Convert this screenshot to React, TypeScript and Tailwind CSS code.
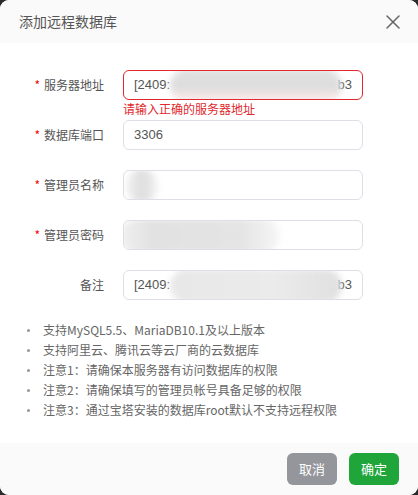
import { X } from 'lucide-react';

const font = { fontFamily: '"Noto Sans CJK SC", "Liberation Sans", sans-serif' };

type Blur = { left: number; width: number; color: string };

function Field({
  label,
  required,
  value,
  error,
  blurs = [],
}: {
  label: string;
  required?: boolean;
  value?: string;
  error?: string;
  blurs?: Blur[];
}) {
  return (
    <div className="flex items-start">
      <div className="w-[104px] h-[30px] flex items-center justify-end text-[12px] text-[#555]">
        {required && <span className="text-[#ef0808] mr-[4px] text-[12px]">*</span>}
        {label}
      </div>
      <div className="ml-[19px] w-[240px] h-[50px]">
        <div
          className={`relative h-[30px] w-full rounded-[6px] border bg-white flex items-center px-[10px] text-[13px] text-[#555] overflow-hidden ${
            error ? 'border-[#e0282e]' : 'border-[#dcdfe6]'
          }`}
          style={{ fontFamily: '"Liberation Sans", Arial, sans-serif' }}
        >
          <span className="whitespace-nowrap">{value}</span>
          {value && value.startsWith('[') && <span className="ml-auto">b3</span>}
          {blurs.map((b, i) => (
            <div
              key={i}
              className="absolute top-[-2px] bottom-[-4px] rounded-full blur-[3px]"
              style={{ left: b.left, width: b.width, background: b.color }}
            />
          ))}
        </div>
        {error && <div className="mt-[1px] text-[12px] leading-[16px] text-[#e0282e]">{error}</div>}
      </div>
    </div>
  );
}

export default function App() {
  const notes = [
    '支持MySQL5.5、MariaDB10.1及以上版本',
    '支持阿里云、腾讯云等云厂商的云数据库',
    '注意1：请确保本服务器有访问数据库的权限',
    '注意2：请确保填写的管理员帐号具备足够的权限',
    '注意3：通过宝塔安装的数据库root默认不支持远程权限',
  ];

  return (
    <div className="w-[418px] h-[495px] bg-[#2b2b2b]" style={font}>
      <div className="w-full h-full bg-white rounded-[9px] overflow-hidden flex flex-col">
        <div className="h-[43px] bg-[#fafafa] flex items-center justify-between pl-[19px] pr-[13px]">
          <span className="text-[14px] text-[#555]">添加远程数据库</span>
          <X className="w-[24px] h-[24px] text-[#666]" strokeWidth={1.5} />
        </div>

        <div className="flex-1 pt-[27px]">
          <Field
            label="服务器地址"
            required
            value="[2409:"
            error="请输入正确的服务器地址"
            blurs={[{ left: 46, width: 172, color: 'linear-gradient(#e0e0e0 0%, #dedede 55%, #f5e6e6 80%, #fdf0f0 100%)' }]}
          />
          <Field
            label="数据库端口"
            required
            value="3306"
          />
          <Field
            label="管理员名称"
            required
            blurs={[{ left: 2, width: 32, color: 'linear-gradient(90deg, #f4f4f4, #e0e0e0 40%, #e0e0e0 60%, #f4f4f4)' }]}
          />
          <Field
            label="管理员密码"
            required
            blurs={[{ left: -4, width: 160, color: 'linear-gradient(90deg, #f0f0f0, #e2e2e2 20%, #e4e4e4 75%, #f6f6f6)' }]}
          />
          <Field
            label="备注"
            value="[2409:"
            blurs={[{ left: 46, width: 172, color: 'linear-gradient(90deg, #e8e8e8, #ebebeb 60%, #e0e0e0)' }]}
          />

          <ul className="pl-[27px]">
            {notes.map((n) => (
              <li key={n} className="flex items-center h-[20px] text-[12px] text-[#666]">
                <span className="w-[3px] h-[3px] rounded-full bg-[#999] mr-[13px]" />
                {n}
              </li>
            ))}
          </ul>
        </div>

        <div className="h-[52px] bg-[#fafafa] flex items-start justify-end gap-[12px] pt-[10px] pr-[19px]">
          <button className="w-[50px] h-[32px] rounded-[6px] bg-[#94969b] text-white text-[13px]">取消</button>
          <button className="w-[50px] h-[32px] rounded-[6px] bg-[#20a53a] text-white text-[13px]">确定</button>
        </div>
      </div>
    </div>
  );
}
